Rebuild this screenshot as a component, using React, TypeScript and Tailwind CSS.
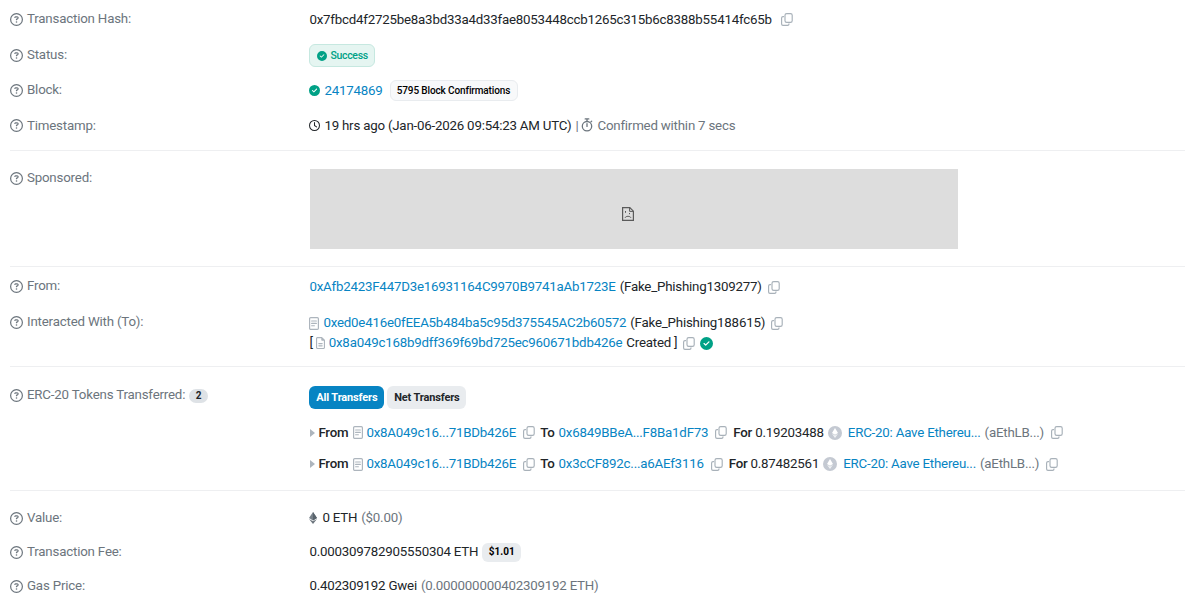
import type { ReactNode } from 'react';
import { FaRegCircleQuestion, FaRegClock, FaRegFileLines, FaCircleCheck } from 'react-icons/fa6';

const CopyIcon = ({ className = 'ml-[9px]' }: { className?: string }) => (
  <svg
    viewBox="0 0 12 13"
    className={`h-[13px] w-3 shrink-0 text-[#a8b1b9] ${className}`}
    fill="none"
    stroke="currentColor"
    strokeWidth="1.15"
    strokeLinecap="round"
  >
    <rect x="4" y="0.6" width="7.2" height="8.8" rx="1.7" />
    <path d="M2.6 3.6H2A1.4 1.4 0 0 0 .6 5v6A1.4 1.4 0 0 0 2 12.4h4.6A1.4 1.4 0 0 0 8 11v-.2" />
  </svg>
);

const ContractIcon = () => (
  <svg viewBox="0 0 10 13" className="h-[13px] w-2.5 shrink-0 text-[#adb5bd]" fill="none" stroke="currentColor">
    <rect x="0.6" y="0.6" width="8.8" height="11.8" rx="1.1" strokeWidth="1.2" />
    <path d="M2.6 4h4.8M2.6 6.4h4.8M2.6 8.8h2.8" strokeWidth="1.1" strokeLinecap="round" />
  </svg>
);

const StopwatchIcon = () => (
  <svg
    viewBox="0 0 12 14"
    className="-mt-px h-3.5 w-3 shrink-0 text-[#6c757d]"
    fill="none"
    stroke="currentColor"
    strokeWidth="1.3"
    strokeLinecap="round"
  >
    <circle cx="6" cy="8.2" r="4.7" />
    <path d="M4.2.9h3.6M6 1v2.3M6 5.6v2.8M10 3.8l.7-.7" />
  </svg>
);

const BrokenImageIcon = () => (
  <svg viewBox="0 0 12 14" className="h-3.5 w-3 text-[#5a5a5a]" fill="none" stroke="currentColor">
    <path d="M.6.6h7.2l3.6 3.6v9.2H.6z" strokeWidth="1.2" />
    <path d="M7.6.8v3.6h3.6" strokeWidth="1" />
    <path d="M3 10.8c1-2 5-2 6 0M3.5 4v1.8M7.5 6v1.2" strokeWidth="1" />
  </svg>
);

const TokenIcon = () => (
  <svg viewBox="0 0 14 14" className="ml-1 h-3.5 w-3.5 shrink-0">
    <circle cx="7" cy="7" r="7" fill="#c4c9d2" />
    <path d="M7 2l3 5-3 1.8L4 7z" fill="#fff" />
    <path d="M4 7.8l3 1.8 3-1.8-3 4.2z" fill="#f1f3f5" />
  </svg>
);

const EthIcon = () => (
  <svg viewBox="0 0 8 12" className="h-3 w-2 shrink-0">
    <path d="M4 0l4 6.1-4 2.3-4-2.3z" fill="#77818a" />
    <path d="M4 0l4 6.1-4 2.3z" fill="#59636c" />
    <path d="M0 7l4 2.3L8 7l-4 5z" fill="#6c757d" />
  </svg>
);

const Link = ({ children, className = '' }: { children: ReactNode; className?: string }) => (
  <a href="#" className={`text-[#0784c3] ${className}`}>{children}</a>
);

interface RowProps {
  label: string;
  labelClass?: string;
  className?: string;
  badge?: string;
  children: ReactNode;
}

const Row = ({ label, labelClass = 'h-full', className = 'h-9', badge, children }: RowProps) => (
  <div className={`flex ${className}`}>
    <div className={`flex w-[299.4px] shrink-0 items-center tracking-[-0.19px] text-[#6c757d] ${labelClass}`}>
      <FaRegCircleQuestion className="mr-[4px] h-[13px] w-[13px] shrink-0" />
      {label}
      {badge && (
        <span className="mt-[2px] ml-1 flex h-3.5 w-[19px] items-center justify-center rounded-full bg-[#dee2e6] text-[10px] font-bold tracking-normal text-[#212529]">
          {badge}
        </span>
      )}
    </div>
    {children}
  </div>
);

const transfers = [
  { from: '0x8A049c16...71BDb426E', to: '0x6849BBeA...F8Ba1dF73', amount: '0.19203488' },
  { from: '0x8A049c16...71BDb426E', to: '0x3cCF892c...a6AEf3116', amount: '0.87482561' },
];

export default function App() {
  return (
    <main className="h-[609px] w-[1200px] overflow-hidden bg-white pr-[15px] pl-[10px] font-['Roboto',sans-serif] text-[13.3px] leading-5 tracking-[-0.21px] whitespace-nowrap text-[#212529]">
      <section className="h-[151px] border-b border-[#eeeff1] pt-px">
        <Row label="Transaction Hash:">
          <div className="flex items-center pt-px">
            0x7fbcd4f2725be8a3bd33a4d33fae8053448ccb1265c315b6c8388b55414fc65b
            <CopyIcon />
          </div>
        </Row>
        <Row label="Status:">
          <div className="flex items-center">
            <span className="flex h-[23px] w-[66px] items-center rounded-md border border-[#c6e8e0] bg-[#e5f5f1] pt-px pl-[7px] text-[10.5px] font-medium tracking-[-0.3px] text-[#00a186]">
              <FaCircleCheck className="mr-[3px] h-2.5 w-2.5" />
              Success
            </span>
          </div>
        </Row>
        <Row label="Block:" className="h-[35px]" labelClass="h-[34px]">
          <div className="flex items-center">
            <FaCircleCheck className="mr-1 h-[11px] w-[11px] text-[#00a186]" />
            <Link>24174869</Link>
            <span className="ml-[7px] flex h-[21px] w-[128px] items-center justify-center rounded-md border border-[#e9ecef] bg-[#f8f9fa] text-[10px] font-medium tracking-[-0.12px] text-black">
              5795 Block Confirmations
            </span>
          </div>
        </Row>
        <Row label="Timestamp:" className="h-[35px]">
          <div className="flex items-center">
            <FaRegClock className="mr-1 h-[11px] w-[11px]" />
            19 hrs ago (Jan-06-2026 09:54:23 AM UTC)
            <span className="mr-[3px] ml-1 text-[#6c757d]">|</span>
            <StopwatchIcon />
            <span className="ml-1 text-[#6c757d]">Confirmed within 7 secs</span>
          </div>
        </Row>
      </section>

      <section className="h-[116px] border-b border-[#eeeff1] pt-[18px]">
        <Row label="Sponsored:" className="h-20" labelClass="h-[18px]">
          <div className="ml-[0.6px] flex h-20 w-[648px] items-center justify-center bg-[#dddddd] pt-[9px] pr-3">
            <BrokenImageIcon />
          </div>
        </Row>
      </section>

      <section className="h-[100px] border-b border-[#eeeff1] pt-[2px]">
        <Row label="From:" labelClass="h-[34px]">
          <div className="flex items-center">
            <Link>0xAfb2423F447D3e16931164C9970B9741aAb1723E</Link>
            <span className="ml-1">(Fake_Phishing1309277)</span>
            <CopyIcon className="ml-1.5" />
          </div>
        </Row>
        <Row label="Interacted With (To):" className="h-[52px]" labelClass="h-[34px]">
          <div className="pt-2">
            <div className="flex h-5 items-center">
              <ContractIcon />
              <Link className="ml-1">0xed0e416e0fEEA5b484ba5c95d375545AC2b60572</Link>
              <span className="ml-1">(Fake_Phishing188615)</span>
              <CopyIcon className="ml-1.5" />
            </div>
            <div className="flex h-5 items-center">
              [
              <FaRegFileLines className="ml-[3px] h-3 w-[9px] text-[#adb5bd]" />
              <Link className="ml-1">0x8a049c168b9dff369f69bd725ec960671bdb426e</Link>
              <span className="ml-1">Created ]</span>
              <CopyIcon className="ml-1.5" />
              <FaCircleCheck className="ml-[5px] h-[13px] w-[13px] text-[#00a186]" />
            </div>
          </div>
        </Row>
      </section>

      <section className="h-[124px] border-b border-[#eeeff1] pt-[19px]">
        <Row label="ERC-20 Tokens Transferred:" badge="2" className="h-[104px]" labelClass="h-[18px]">
          <div>
            <div className="flex gap-[3px] text-[11px] font-bold tracking-[-0.15px]">
              <button type="button" className="h-[23px] w-[75px] rounded-md bg-[#0784c3] text-white">
                All Transfers
              </button>
              <button type="button" className="h-[23px] w-[79px] rounded-md bg-[#e9ecef]">
                Net Transfers
              </button>
            </div>
            <div className="pt-2">
              {transfers.map((t) => (
                <div key={t.to} className="flex h-[31.5px] items-center">
                  <svg viewBox="0 0 5 8" className="mr-[3px] ml-px h-2 w-[5px] text-[#adb5bd]">
                    <path d="M0 0l5 4-5 4z" fill="currentColor" />
                  </svg>
                  <span className="mr-[5px] font-medium">From</span>
                  <ContractIcon />
                  <Link className="ml-[3px]">{t.from}</Link>
                  <CopyIcon className="ml-[7px]" />
                  <span className="mr-1 ml-[5px] font-medium">To</span>
                  <Link>{t.to}</Link>
                  <CopyIcon className="ml-[7px]" />
                  <span className="mr-[3px] ml-[6px] font-medium">For</span>
                  {t.amount}
                  <TokenIcon />
                  <Link className="ml-[6px]">ERC-20: Aave Ethereu...</Link>
                  <span className="ml-1 text-[#6c757d]">(aEthLB...)</span>
                  <CopyIcon className="ml-[7px]" />
                </div>
              ))}
            </div>
          </div>
        </Row>
      </section>

      <section className="pt-[9px]">
        <Row label="Value:">
          <div className="flex items-center">
            <EthIcon />
            <span className="ml-[5px]">0 ETH</span>
            <span className="ml-1 text-[#6c757d]">($0.00)</span>
          </div>
        </Row>
        <Row label="Transaction Fee:" className="h-8">
          <div className="flex items-center">
            0.000309782905550304 ETH
            <span className="ml-1 flex h-[19px] w-[39px] items-center justify-center rounded-md bg-[#e9ecef] text-[10px] font-bold tracking-normal text-black">
              $1.01
            </span>
          </div>
        </Row>
        <Row label="Gas Price:">
          <div className="flex items-center">
            0.402309192 Gwei
            <span className="ml-1 text-[#6c757d]">(0.000000000402309192 ETH)</span>
          </div>
        </Row>
      </section>
    </main>
  );
}
